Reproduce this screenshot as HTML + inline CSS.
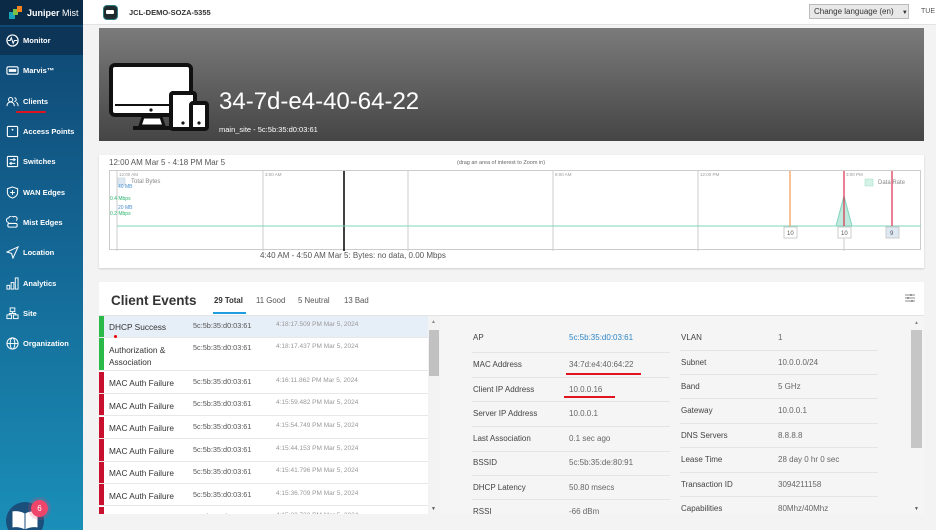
<!DOCTYPE html>
<html style="width:936px;height:530px;overflow:hidden"><head><meta charset="utf-8">
<style>
*{box-sizing:border-box;margin:0;padding:0}
body{width:936px;height:530px;overflow:hidden;font-family:"Liberation Sans",sans-serif;background:#f3f3f3;position:relative;color:#333;white-space:nowrap}
.side{position:absolute;left:0;top:0;width:83px;height:530px;background:linear-gradient(180deg,#0f4470 0%,#13618f 40%,#1a8fb8 100%)}
.logo{height:25px;background:#0b2a45;color:#fff;font-size:9px;font-weight:bold;display:flex;align-items:center;padding-left:9px}
.mon{position:absolute;top:27px;left:0;width:83px;height:28px;background:#0d3558}
.it{position:absolute;left:0;width:83px;height:20px;display:flex;align-items:center;color:#fff;font-size:7.5px;font-weight:bold;padding-left:6px}
.it svg{width:13px;height:13px;margin-right:4px;flex:none}
.top{position:absolute;left:83px;top:0;right:0;height:25px;background:#fff;border-bottom:1px solid #e2e2e2}
.banner{position:absolute;left:99px;top:28px;width:825px;height:113px;background:linear-gradient(180deg,#7b7b7b,#454545)}
.card{position:absolute;background:#fff;box-shadow:0 1px 2px rgba(0,0,0,.15)}
.row{position:absolute;left:99px;width:329px;border-bottom:1px solid #e8e8e8;background:#fff}
.row .bar{position:absolute;left:0;top:0;bottom:0;width:5px}
.row .n{position:absolute;left:10px;font-size:8.3px;color:#333}
.row .m{position:absolute;left:94px;font-size:7.3px;color:#555}
.row .d{position:absolute;left:177px;font-size:6.5px;color:#999}
.lb{position:absolute;font-size:8px;color:#444}
.vl{position:absolute;font-size:8px;color:#666}
.hl{position:absolute;height:1px;background:#e4e4e4}
</style></head><body>
<div class="side">
 <div class="logo"><svg width="14" height="14" viewBox="0 0 14 14"><rect x="0" y="6" width="6" height="7" fill="#1aa3b8"/><rect x="4" y="3" width="5" height="6" fill="#7bbf44"/><rect x="8" y="0" width="5" height="6" fill="#f58220"/></svg><span style="margin-left:4px">Juniper <span style="font-weight:normal">Mist</span></span></div>
 <div class="mon"></div>
 <div class="it" style="top:30px"><svg viewBox="0 0 14 14"><circle cx="7" cy="7" r="6" fill="none" stroke="#fff" stroke-width="1.3"/><path d="M2 7h2.5l1.2-3 2 6 1.3-3H12" fill="none" stroke="#fff" stroke-width="1.1"/></svg>Monitor</div>
 <div class="it" style="top:60px"><svg viewBox="0 0 14 14"><rect x="1" y="3" width="12" height="8" rx="1.5" fill="none" stroke="#fff" stroke-width="1.2"/><rect x="3" y="5.5" width="8" height="3" fill="#fff"/></svg>Marvis™</div>
 <div class="it" style="top:91px"><svg viewBox="0 0 14 14"><circle cx="5" cy="5" r="2.3" fill="none" stroke="#fff" stroke-width="1.1"/><path d="M1 12c0-3 2-4.5 4-4.5s4 1.5 4 4.5M9 3a2 2 0 010 4M11 8c1.5.5 2 2 2 4" fill="none" stroke="#fff" stroke-width="1.1"/></svg>Clients</div>
 <div style="position:absolute;left:16px;top:111px;width:30px;height:2px;background:#e0141e;border-radius:1px"></div>
 <div class="it" style="top:121px"><svg viewBox="0 0 14 14"><rect x="1.5" y="1.5" width="11" height="11" rx="1" fill="none" stroke="#fff" stroke-width="1.2"/><circle cx="7" cy="5" r="1" fill="#fff"/></svg>Access Points</div>
 <div class="it" style="top:151px"><svg viewBox="0 0 14 14"><rect x="1.5" y="1.5" width="11" height="11" rx="1" fill="none" stroke="#fff" stroke-width="1.2"/><path d="M4 5h6M8 3.5l2 1.5-2 1.5M10 9H4M6 7.5 4 9l2 1.5" fill="none" stroke="#fff" stroke-width="1"/></svg>Switches</div>
 <div class="it" style="top:182px"><svg viewBox="0 0 14 14"><path d="M7 1l5.5 2v4c0 3-2.5 5-5.5 6-3-1-5.5-3-5.5-6V3z" fill="none" stroke="#fff" stroke-width="1.1"/><path d="M7 4.5v5M4.5 7h5" stroke="#fff" stroke-width="1.1"/></svg>WAN Edges</div>
 <div class="it" style="top:212px"><svg viewBox="0 0 14 14"><path d="M3 7a2.5 2.5 0 010-5 3 3 0 015 -1 2.5 2.5 0 013 4" fill="none" stroke="#fff" stroke-width="1.1"/><rect x="2" y="8" width="10" height="4" rx="1.5" fill="none" stroke="#fff" stroke-width="1.1"/></svg>Mist Edges</div>
 <div class="it" style="top:242px"><svg viewBox="0 0 14 14"><path d="M13 1 1 6.5l5 1.5 1.5 5z" fill="none" stroke="#fff" stroke-width="1.1"/></svg>Location</div>
 <div class="it" style="top:273px"><svg viewBox="0 0 14 14"><rect x="1" y="9" width="3" height="4" fill="none" stroke="#fff"/><rect x="5.5" y="6" width="3" height="7" fill="none" stroke="#fff"/><rect x="10" y="1" width="3" height="12" fill="none" stroke="#fff"/></svg>Analytics</div>
 <div class="it" style="top:303px"><svg viewBox="0 0 14 14"><rect x="4.5" y="1" width="5" height="4" fill="none" stroke="#fff"/><rect x="1" y="8.5" width="5" height="4" fill="none" stroke="#fff"/><rect x="8" y="8.5" width="5" height="4" fill="none" stroke="#fff"/><path d="M7 5v2M3.5 8.5V7h7v1.5" fill="none" stroke="#fff"/></svg>Site</div>
 <div class="it" style="top:333px"><svg viewBox="0 0 14 14"><circle cx="7" cy="7" r="6" fill="none" stroke="#fff" stroke-width="1.1"/><ellipse cx="7" cy="7" rx="2.5" ry="6" fill="none" stroke="#fff"/><path d="M1 7h12" stroke="#fff"/></svg>Organization</div>
 <div style="position:absolute;left:6px;top:502px;width:38px;height:38px;border-radius:50%;background:#1a4f7c"></div>
 <svg style="position:absolute;left:10px;top:508px" width="30" height="22" viewBox="0 0 30 22"><path d="M2 3c5-1 9 0 13 2v17c-4-2-8-3-13-2zM28 3c-5-1-9 0-13 2v17c4-2 8-3 13-2z" fill="#fff" stroke="#1a4f7c" stroke-width="1"/></svg>
 <div style="position:absolute;left:31px;top:500px;width:17px;height:17px;border-radius:50%;background:#f0456b;color:#fff;font-size:8px;text-align:center;line-height:17px;box-shadow:0 0 0 3px rgba(240,69,107,.2)">6</div>
</div>
<div class="top">
 <div style="position:absolute;left:20px;top:5px;width:15px;height:15px;border-radius:4px;background:#1f2b2e;border:1.5px solid #2a7a80"><div style="position:absolute;left:2px;top:4px;width:8px;height:4px;background:#fff;border-radius:1px"></div></div>
 <div style="position:absolute;left:46px;top:8px;font-size:7.5px;font-weight:bold;color:#333">JCL-DEMO-SOZA-5355</div>
 <div style="position:absolute;left:726px;top:4px;width:100px;height:15px;border:1px solid #bbb;background:#e8e8e8;font-size:8px;color:#333;padding:2px 0 0 4px">Change language (en) <span style="font-size:6px;margin-left:6px">▼</span></div>
 <div style="position:absolute;left:838px;top:8px;font-size:7px;color:#555;white-space:nowrap">TUE 4</div>
</div>
<div class="banner">
 <svg style="position:absolute;left:10px;top:35px" width="102" height="70" viewBox="0 0 102 70"><rect x="2" y="2" width="80" height="50" rx="4" fill="#fff" stroke="#111" stroke-width="4"/><rect x="6" y="42" width="72" height="8" fill="#fff"/><path d="M6 42h72" stroke="#111" stroke-width="2"/><circle cx="42" cy="47" r="1.6" fill="#111"/><path d="M34 54h18l3 9H31z" fill="#fff" stroke="#111" stroke-width="3"/><path d="M24 65h40" stroke="#111" stroke-width="4"/><rect x="62" y="30" width="24" height="36" rx="2" fill="#fff" stroke="#111" stroke-width="4"/><rect x="82" y="40" width="16" height="26" rx="2" fill="#fff" stroke="#111" stroke-width="4"/><circle cx="74" cy="60" r="1.6" fill="#111"/><circle cx="90" cy="60" r="1.6" fill="#111"/></svg>
 <div style="position:absolute;left:120px;top:60px;font-size:24px;color:#fff">34-7d-e4-40-64-22</div>
 <div style="position:absolute;left:120px;top:97px;font-size:7.5px;color:#fff">main_site - 5c:5b:35:d0:03:61</div>
</div>
<div class="card" style="left:99px;top:155px;width:825px;height:113px">
 <div style="position:absolute;left:10px;top:3px;font-size:8px;color:#555">12:00 AM Mar 5 - 4:18 PM Mar 5</div>
 <div style="position:absolute;left:358px;top:5px;font-size:5.5px;color:#666">(drag an area of interest to Zoom in)</div>
 <div style="position:absolute;left:10px;top:15px;width:812px;height:80px;border:1px solid #ccc">
  <svg width="812" height="80" style="position:absolute;left:0;top:0">
   <g stroke="#ccc" stroke-width="1"><path d="M153 0v80M298 0v80M443 0v80M588 0v80M734 0v80M7 0v80"/></g>
   <path d="M234 0v80" stroke="#000" stroke-width="1.5"/>
   <path d="M7 55H811" stroke="#7fd4bb" stroke-width="1"/>
   <path d="M726 55l8-30 8 30z" fill="#bfeadd" stroke="#7fd4bb"/>
   <path d="M680 0v55" stroke="#f39a55" stroke-width="1.2"/>
   <path d="M734 0v55M782 0v55" stroke="#d9304c" stroke-width="1.2"/>
   <g font-size="4.5" fill="#999" font-family="Liberation Sans"><text x="9" y="5">12:00 AM</text><text x="155" y="5">3:00 AM</text><text x="445" y="5">9:00 AM</text><text x="590" y="5">12:00 PM</text><text x="736" y="5">3:00 PM</text></g>
   <rect x="8" y="7" width="7" height="7" fill="#dde8f3" stroke="#b8cde0" stroke-width=".5"/><text x="21" y="12" font-size="6" fill="#888" font-family="Liberation Sans">Total Bytes</text>
   <text x="8" y="17" font-size="5" fill="#4a8fd0" font-family="Liberation Sans">40 MB</text>
   <text x="0" y="29" font-size="5" fill="#2bb56e" font-family="Liberation Sans">0.4 Mbps</text>
   <text x="8" y="38" font-size="5" fill="#4a8fd0" font-family="Liberation Sans">20 MB</text>
   <text x="0" y="44" font-size="5" fill="#2bb56e" font-family="Liberation Sans">0.2 Mbps</text>
   <rect x="755" y="8" width="8" height="7" fill="#d4f2e6" stroke="#9fdcc3" stroke-width=".5"/><text x="768" y="13" font-size="6" fill="#888" font-family="Liberation Sans">Data Rate</text>
   <g font-size="6" fill="#555" font-family="Liberation Sans"><rect x="674" y="56" width="13" height="11" fill="#fff" stroke="#ccc"/><text x="677" y="64">10</text><rect x="728" y="56" width="13" height="11" fill="#fff" stroke="#ccc"/><text x="731" y="64">10</text><rect x="776" y="56" width="13" height="11" fill="#dde8f3" stroke="#ccc"/><text x="780" y="64">9</text></g>
  </svg>
 </div>
 <div style="position:absolute;left:161px;top:96px;font-size:8px;color:#555">4:40 AM - 4:50 AM Mar 5: Bytes: no data, 0.00 Mbps</div>
</div>
<div class="card" style="left:99px;top:282px;width:825px;height:248px;box-shadow:none">
 <div style="position:absolute;left:12px;top:11px;font-size:13.5px;font-weight:bold;color:#333">Client Events</div>
 <div style="position:absolute;left:115px;top:14px;font-size:7.8px;color:#333;font-weight:bold">29 Total</div>
 <div style="position:absolute;left:114px;top:30px;width:33px;height:2px;background:#1e9ee0"></div>
 <div style="position:absolute;left:157px;top:14px;font-size:7.8px;color:#555">11 Good</div>
 <div style="position:absolute;left:199px;top:14px;font-size:7.8px;color:#555">5 Neutral</div>
 <div style="position:absolute;left:245px;top:14px;font-size:7.8px;color:#555">13 Bad</div>
 <svg style="position:absolute;left:806px;top:12px" width="10" height="8"><path d="M0 1h10M0 4h10M0 7h10" stroke="#666" stroke-width=".8"/><path d="M6 0v2M3 3v2M7 6v2" stroke="#666"/></svg>
 <div style="position:absolute;left:0;top:33px;width:825px;height:1px;background:#e4e4e4"></div>
</div>
<div class="row" style="top:316px;height:22px;background:#e6eef7"><div class="bar" style="background:#2bb94a"></div><span class="n" style="top:6px">DHCP Success</span><span class="m" style="top:5px">5c:5b:35:d0:03:61</span><span class="d" style="top:5px">4:18:17.509 PM Mar 5, 2024</span></div>
<div style="position:absolute;left:114px;top:335px;width:3px;height:3px;border-radius:50%;background:#e00"></div>
<div class="row" style="top:338px;height:33px"><div class="bar" style="background:#2bb94a"></div><span class="n" style="top:6px;line-height:12px">Authorization &amp;<br>Association</span><span class="m" style="top:5px">5c:5b:35:d0:03:61</span><span class="d" style="top:5px">4:18:17.437 PM Mar 5, 2024</span></div>
<div class="row" style="top:372px;height:22px"><div class="bar" style="background:#c8102e"></div><span class="n" style="top:6px">MAC Auth Failure</span><span class="m" style="top:5px">5c:5b:35:d0:03:61</span><span class="d" style="top:5px">4:16:11.862 PM Mar 5, 2024</span></div>
<div class="row" style="top:394px;height:22px"><div class="bar" style="background:#c8102e"></div><span class="n" style="top:7px">MAC Auth Failure</span><span class="m" style="top:5px">5c:5b:35:d0:03:61</span><span class="d" style="top:5px">4:15:59.482 PM Mar 5, 2024</span></div>
<div class="row" style="top:417px;height:22px"><div class="bar" style="background:#c8102e"></div><span class="n" style="top:6px">MAC Auth Failure</span><span class="m" style="top:5px">5c:5b:35:d0:03:61</span><span class="d" style="top:5px">4:15:54.749 PM Mar 5, 2024</span></div>
<div class="row" style="top:439px;height:23px"><div class="bar" style="background:#c8102e"></div><span class="n" style="top:7px">MAC Auth Failure</span><span class="m" style="top:6px">5c:5b:35:d0:03:61</span><span class="d" style="top:6px">4:15:44.153 PM Mar 5, 2024</span></div>
<div class="row" style="top:462px;height:22px"><div class="bar" style="background:#c8102e"></div><span class="n" style="top:6px">MAC Auth Failure</span><span class="m" style="top:5px">5c:5b:35:d0:03:61</span><span class="d" style="top:5px">4:15:41.796 PM Mar 5, 2024</span></div>
<div class="row" style="top:484px;height:22px"><div class="bar" style="background:#c8102e"></div><span class="n" style="top:7px">MAC Auth Failure</span><span class="m" style="top:6px">5c:5b:35:d0:03:61</span><span class="d" style="top:6px">4:15:36.709 PM Mar 5, 2024</span></div>
<div class="row" style="top:507px;height:23px;overflow:hidden"><div class="bar" style="background:#c8102e"></div><span class="n" style="top:6px">MAC Auth Failure</span><span class="m" style="top:5px">5c:5b:35:d0:03:61</span><span class="d" style="top:5px">4:15:33.723 PM Mar 5, 2024</span></div>
<div style="position:absolute;left:428px;top:316px;width:12px;height:198px;background:#f3f3f3"></div>
<div style="position:absolute;left:429px;top:330px;width:10px;height:46px;background:#c1c1c1"></div>
<div style="position:absolute;left:431px;top:319px;font-size:5px;color:#888">▲</div>
<div style="position:absolute;left:431px;top:506px;font-size:5px;color:#555">▼</div>
<div style="position:absolute;left:440px;top:316px;width:484px;height:198px;background:#f5f5f5"></div>
<div style="position:absolute;left:911px;top:330px;width:11px;height:118px;background:#c6c6c6"></div>
<div style="position:absolute;left:914px;top:320px;font-size:5px;color:#888">▲</div>
<div style="position:absolute;left:914px;top:506px;font-size:5px;color:#555">▼</div>
<div class="lb" style="left:473px;top:333px">AP</div><div class="vl" style="left:569px;top:333px;color:#2f86c8">5c:5b:35:d0:03:61</div>
<div class="hl" style="left:472px;top:352px;width:198px"></div>
<div class="lb" style="left:473px;top:360px">MAC Address</div><div class="vl" style="left:569px;top:360px">34:7d:e4:40:64:22</div>
<div style="position:absolute;left:566px;top:373px;width:75px;height:2px;background:#e0141e"></div>
<div class="hl" style="left:472px;top:377px;width:198px"></div>
<div class="lb" style="left:473px;top:385px">Client IP Address</div><div class="vl" style="left:569px;top:385px">10.0.0.16</div>
<div style="position:absolute;left:564px;top:396px;width:51px;height:2px;background:#e0141e"></div>
<div class="hl" style="left:472px;top:401px;width:198px"></div>
<div class="lb" style="left:473px;top:409px">Server IP Address</div><div class="vl" style="left:569px;top:409px">10.0.0.1</div>
<div class="hl" style="left:472px;top:426px;width:198px"></div>
<div class="lb" style="left:473px;top:434px">Last Association</div><div class="vl" style="left:569px;top:434px">0.1 sec ago</div>
<div class="hl" style="left:472px;top:451px;width:198px"></div>
<div class="lb" style="left:473px;top:458px">BSSID</div><div class="vl" style="left:569px;top:458px">5c:5b:35:de:80:91</div>
<div class="hl" style="left:472px;top:475px;width:198px"></div>
<div class="lb" style="left:473px;top:483px">DHCP Latency</div><div class="vl" style="left:569px;top:483px">50.80 msecs</div>
<div class="hl" style="left:472px;top:499px;width:198px"></div>
<div class="lb" style="left:473px;top:507px">RSSI</div><div class="vl" style="left:569px;top:507px">-66 dBm</div>
<div class="lb" style="left:681px;top:333px">VLAN</div><div class="vl" style="left:778px;top:333px">1</div>
<div class="hl" style="left:680px;top:350px;width:198px"></div>
<div class="lb" style="left:681px;top:358px">Subnet</div><div class="vl" style="left:778px;top:358px">10.0.0.0/24</div>
<div class="hl" style="left:680px;top:374px;width:198px"></div>
<div class="lb" style="left:681px;top:382px">Band</div><div class="vl" style="left:778px;top:382px">5 GHz</div>
<div class="hl" style="left:680px;top:398px;width:198px"></div>
<div class="lb" style="left:681px;top:406px">Gateway</div><div class="vl" style="left:778px;top:406px">10.0.0.1</div>
<div class="hl" style="left:680px;top:423px;width:198px"></div>
<div class="lb" style="left:681px;top:431px">DNS Servers</div><div class="vl" style="left:778px;top:431px">8.8.8.8</div>
<div class="hl" style="left:680px;top:447px;width:198px"></div>
<div class="lb" style="left:681px;top:455px">Lease Time</div><div class="vl" style="left:778px;top:455px">28 day 0 hr 0 sec</div>
<div class="hl" style="left:680px;top:472px;width:198px"></div>
<div class="lb" style="left:681px;top:480px">Transaction ID</div><div class="vl" style="left:778px;top:480px">3094211158</div>
<div class="hl" style="left:680px;top:496px;width:198px"></div>
<div class="lb" style="left:681px;top:504px">Capabilities</div><div class="vl" style="left:778px;top:504px">80Mhz/40Mhz</div>
<div style="position:absolute;left:99px;top:514px;width:825px;height:16px;background:#f3f3f3"></div>
</body></html>
